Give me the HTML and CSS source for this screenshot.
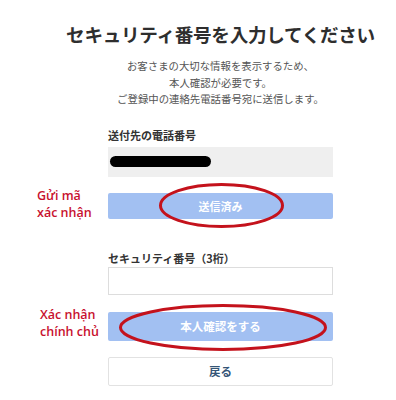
FILE: index.html
```html
<!DOCTYPE html>
<html lang="ja">
<head>
<meta charset="utf-8">
<link rel="stylesheet" href="styles.css">
</head>
<body>
<div class="page">
  <h1 class="title">セキュリティ番号を入力してください</h1>
  <p class="lead">お客さまの大切な情報を表示するため、<br>本人確認が必要です。<br>ご登録中の連絡先電話番号宛に送信します。</p>
  <div class="form">
    <div class="label">送付先の電話番号</div>
    <div class="phone"><span class="redact"></span></div>
    <button class="btn primary b1">送信済み</button>
    <div class="label l2">セキュリティ番号（3桁）</div>
    <input class="field" type="text">
    <button class="btn primary b2">本人確認をする</button>
    <button class="btn back">戻る</button>
  </div>
  <div class="note n1">Gửi mã<br>xác nhận</div>
  <div class="note n2">Xác nhận<br>chính chủ</div>
  <svg class="ring r1" width="127" height="47" viewBox="0 0 127 47"><ellipse cx="63.5" cy="23.5" rx="61" ry="21" fill="none" stroke="#c4121c" stroke-width="3"/></svg>
  <svg class="ring r2" width="210" height="49" viewBox="0 0 210 49"><ellipse cx="105" cy="24.5" rx="102.5" ry="22" fill="none" stroke="#c4121c" stroke-width="3"/></svg>
</div>
</body>
</html>
```
FILE: styles.css
```css
html, body {
  margin: 0;
  padding: 0;
  background: #ffffff;
}
.page {
  position: relative;
  width: 396px;
  height: 400px;
  padding-left: 45px;
  box-sizing: border-box;
  font-family: "Noto Sans CJK JP", "Noto Sans", sans-serif;
  color: #333333;
  overflow: hidden;
}
.title {
  margin: 22px 0 0;
  font-size: 18.6px;
  line-height: 24px;
  font-weight: 700;
  text-align: center;
  white-space: nowrap;
  color: #2e2e2e;
  letter-spacing: -0.3px;
}
.lead {
  margin: 12px 0 0;
  font-size: 10.4px;
  line-height: 16.5px;
  text-align: center;
  color: #555555;
}
.form {
  width: 225px;
  margin: 0 auto;
  display: flex;
  flex-direction: column;
}
.label {
  margin-top: 19px;
  font-size: 11px;
  line-height: 16px;
  font-weight: 700;
  color: #333333;
}
.label.l2 {
  margin-top: 31px;
}
.phone {
  margin-top: 4px;
  height: 30px;
  background: #efefef;
  display: flex;
  align-items: center;
  padding-left: 2px;
}
.redact {
  width: 101px;
  height: 11px;
  border-radius: 6px;
  background: #000000;
}
.btn {
  display: block;
  width: 100%;
  border: none;
  border-radius: 2px;
  font-family: inherit;
  font-weight: 700;
  font-size: 11px;
  padding: 0;
  cursor: pointer;
}
.primary {
  background: #a2c0f2;
  color: #ffffff;
}
.b1 {
  margin-top: 16px;
  height: 26px;
}
.field {
  margin-top: 1px;
  height: 28px;
  box-sizing: border-box;
  border: 1px solid #dddddd;
  background: #ffffff;
  padding: 0 6px;
}
.b2 {
  margin-top: 17px;
  height: 29px;
  font-size: 11.5px;
}
.back {
  margin-top: 16px;
  height: 29px;
  background: #ffffff;
  border: 1px solid #e2e2e2;
  color: #355677;
  font-size: 11.5px;
}
.note {
  position: absolute;
  font-family: "Open Sans", "Noto Sans", sans-serif;
  font-weight: 600;
  font-size: 12.5px;
  line-height: 17px;
  color: #c8102e;
}
.n1 {
  left: 37px;
  top: 187px;
}
.n2 {
  left: 40px;
  top: 306px;
}
.ring {
  position: absolute;
}
.r1 {
  left: 158px;
  top: 182px;
}
.r2 {
  left: 118px;
  top: 303px;
}
```
